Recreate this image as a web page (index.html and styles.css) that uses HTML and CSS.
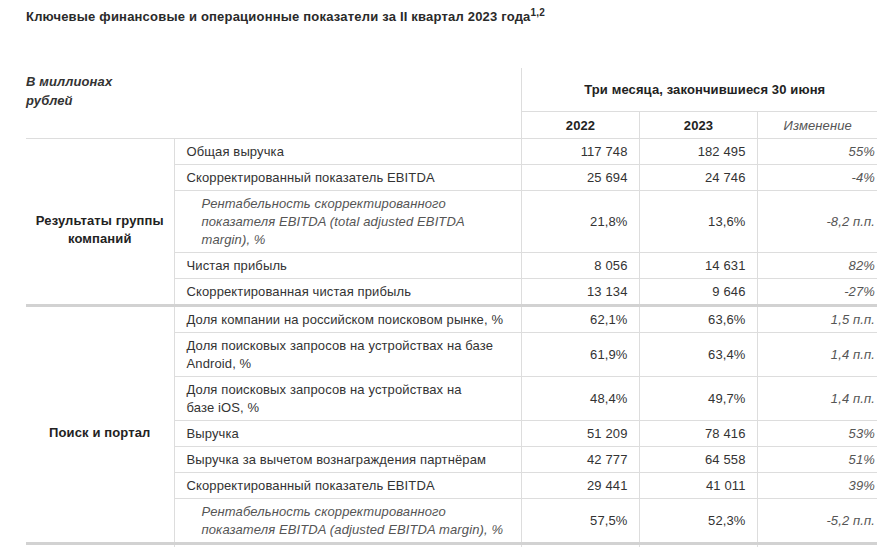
FILE: index.html
```html
<!DOCTYPE html>
<html lang="ru">
<head>
<meta charset="utf-8">
<link rel="stylesheet" href="styles.css">
</head>
<body>
<div class="page">
  <h1 class="title">Ключевые финансовые и операционные показатели за II квартал 2023 года<sup>1,2</sup></h1>
  <table class="report">
    <colgroup>
      <col class="c-cat"><col class="c-metric"><col class="c-num"><col class="c-num"><col class="c-chg">
    </colgroup>
    <thead>
      <tr class="h-top">
        <th class="unit" colspan="2" rowspan="2">В миллионах<br>рублей</th>
        <th class="period" colspan="3">Три месяца, закончившиеся 30 июня</th>
      </tr>
      <tr class="h-years">
        <th class="year">2022</th>
        <th class="year">2023</th>
        <th class="year chg-h">Изменение</th>
      </tr>
    </thead>
    <tbody>
      <tr>
        <td class="cat grp-end" rowspan="5">Результаты группы<br>компаний</td>
        <td class="metric">Общая выручка</td>
        <td class="num">117 748</td><td class="num">182 495</td><td class="chg">55%</td>
      </tr>
      <tr>
        <td class="metric">Скорректированный показатель EBITDA</td>
        <td class="num">25 694</td><td class="num">24 746</td><td class="chg">-4%</td>
      </tr>
      <tr>
        <td class="metric sub">Рентабельность скорректированного показателя EBITDA (total adjusted EBITDA margin), %</td>
        <td class="num">21,8%</td><td class="num">13,6%</td><td class="chg">-8,2 п.п.</td>
      </tr>
      <tr>
        <td class="metric">Чистая прибыль</td>
        <td class="num">8 056</td><td class="num">14 631</td><td class="chg">82%</td>
      </tr>
      <tr class="last">
        <td class="metric">Скорректированная чистая прибыль</td>
        <td class="num">13 134</td><td class="num">9 646</td><td class="chg">-27%</td>
      </tr>
      <tr>
        <td class="cat grp-end" rowspan="7">Поиск и портал</td>
        <td class="metric">Доля компании на российском поисковом рынке, %</td>
        <td class="num">62,1%</td><td class="num">63,6%</td><td class="chg">1,5 п.п.</td>
      </tr>
      <tr>
        <td class="metric">Доля поисковых запросов на устройствах на базе Android, %</td>
        <td class="num">61,9%</td><td class="num">63,4%</td><td class="chg">1,4 п.п.</td>
      </tr>
      <tr>
        <td class="metric">Доля поисковых запросов на устройствах на базе&nbsp;iOS, %</td>
        <td class="num">48,4%</td><td class="num">49,7%</td><td class="chg">1,4 п.п.</td>
      </tr>
      <tr>
        <td class="metric">Выручка</td>
        <td class="num">51 209</td><td class="num">78 416</td><td class="chg">53%</td>
      </tr>
      <tr>
        <td class="metric">Выручка за вычетом вознаграждения партнёрам</td>
        <td class="num">42 777</td><td class="num">64 558</td><td class="chg">51%</td>
      </tr>
      <tr>
        <td class="metric">Скорректированный показатель EBITDA</td>
        <td class="num">29 441</td><td class="num">41 011</td><td class="chg">39%</td>
      </tr>
      <tr class="last">
        <td class="metric sub">Рентабельность скорректированного показателя EBITDA (adjusted EBITDA margin), %</td>
        <td class="num">57,5%</td><td class="num">52,3%</td><td class="chg">-5,2 п.п.</td>
      </tr>
      <tr class="spacer">
        <td class="cat"></td><td class="metric"></td><td class="num"></td><td class="num"></td><td class="chg"></td>
      </tr>
    </tbody>
  </table>
</div>
</body>
</html>
```

FILE: styles.css
```css
html, body {
  margin: 0;
  padding: 0;
  background: #ffffff;
}

body {
  font-family: "Liberation Sans", Arial, sans-serif;
  font-size: 13px;
  line-height: 18px;
  letter-spacing: 0.12px;
  color: #333333;
}

.page {
  padding: 8px 0 0 26px;
}

.title {
  margin: 0;
  font-size: 13px;
  line-height: 18px;
  font-weight: bold;
  letter-spacing: 0.2px;
  color: #2a2a2a;
}

.title sup {
  font-size: 10px;
  line-height: 0;
  vertical-align: 5px;
}

.report {
  margin-top: 42px;
  border-collapse: collapse;
  table-layout: fixed;
  width: 851px;
}

.c-cat { width: 148px; }
.c-metric { width: 347px; }
.c-num { width: 118px; }
.c-chg { width: 120px; }

.report th,
.report td {
  padding: 4px 11px 3px 12px;
  vertical-align: middle;
}

.unit {
  text-align: left;
  vertical-align: top !important;
  padding: 4px 0 0 0 !important;
  font-weight: bold;
  font-style: italic;
  line-height: 19px;
  color: #333333;
  border-bottom: 1px solid #dddddd;
}

.h-top th {
  height: 36px;
}

.period {
  font-weight: bold;
  text-align: center;
  border-left: 1px solid #dddddd;
  border-bottom: 1px solid #dddddd;
  color: #222222;
  padding-left: 22px !important;
}

.year {
  font-weight: bold;
  text-align: center;
  border-left: 1px solid #dddddd;
  border-bottom: 1px solid #dddddd;
  color: #222222;
  height: 19px;
}

.year.chg-h {
  font-weight: normal;
  font-style: italic;
  color: #555555;
}

.cat {
  font-weight: bold;
  text-align: center;
  color: #222222;
  padding: 17px 4px 0 4px !important;
}

.cat.grp-end {
  border-bottom: 3px solid #d2d2d2;
}

.metric {
  border-left: 1px solid #dddddd;
  border-bottom: 1px solid #dddddd;
  text-align: left;
}

.metric.sub {
  font-style: italic;
  color: #555555;
  padding-left: 27px;
  padding-right: 11px;
}

.num {
  border-left: 1px solid #dddddd;
  border-bottom: 1px solid #dddddd;
  text-align: right;
}

.chg {
  border-left: 1px solid #dddddd;
  border-bottom: 1px solid #dddddd;
  text-align: right;
  font-style: italic;
  color: #555555;
  padding-right: 2px !important;
}

.last td {
  border-bottom: 3px solid #d2d2d2;
}

.spacer td {
  height: 30px;
  border-bottom: none;
}
```
